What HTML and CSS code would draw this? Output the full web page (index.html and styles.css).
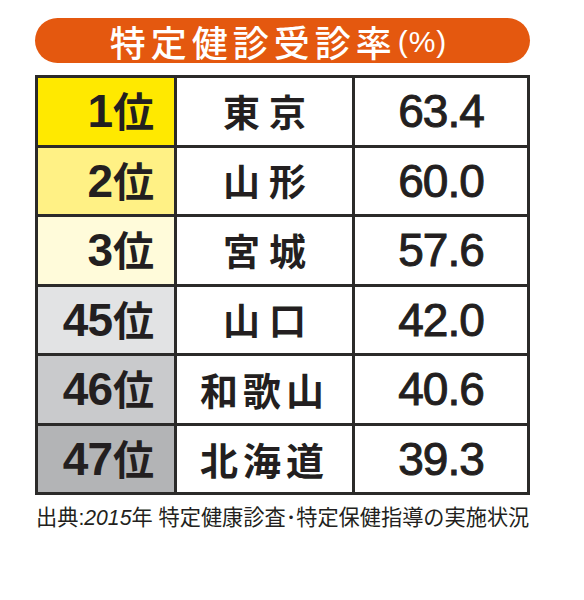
FILE: index.html
```html
<!DOCTYPE html>
<html lang="ja">
<head>
	<meta charset="UTF-8">
	<title>特定健診受診率</title>
	<link rel="stylesheet" href="styles.css">
</head>
<body>
	<section class="ranking">
		<h3 class="ranking-title">特定健診受診率<span class="unit">(%)</span></h3>
		<table class="ranking-table">
			<tr>
				<td class="rank rank-1"><span class="num">1</span>位</td>
				<td class="pref wide">東京</td>
				<td class="value">63.4</td>
			</tr>
			<tr>
				<td class="rank rank-2"><span class="num">2</span>位</td>
				<td class="pref wide">山形</td>
				<td class="value">60.0</td>
			</tr>
			<tr>
				<td class="rank rank-3"><span class="num">3</span>位</td>
				<td class="pref wide">宮城</td>
				<td class="value">57.6</td>
			</tr>
			<tr>
				<td class="rank rank-45"><span class="num">45</span>位</td>
				<td class="pref wide">山口</td>
				<td class="value">42.0</td>
			</tr>
			<tr>
				<td class="rank rank-46"><span class="num">46</span>位</td>
				<td class="pref">和歌山</td>
				<td class="value">40.6</td>
			</tr>
			<tr>
				<td class="rank rank-47"><span class="num">47</span>位</td>
				<td class="pref">北海道</td>
				<td class="value">39.3</td>
			</tr>
		</table>
		<p class="source">出典<span class="latin">:</span><i class="latin">2015</i>年<span class="latin"> </span>特定健康診査･特定保健指導の実施状況</p>
	</section>
</body>
</html>
```

FILE: styles.css
```css
* {
	box-sizing: border-box;
}
html {
	background-color: #fff;
	color: #231f20;
}
body {
	margin: 0;
	padding: 0;
	font-family: "Noto Sans CJK JP", sans-serif;
}
.ranking {
	width: 495px;
	margin: 18px 0 0 35px;
}
.ranking-title {
	height: 45px;
	margin: 0 0 12px 0;
	border-radius: 23px;
	background: #e4580f;
	color: #fff;
	display: flex;
	justify-content: center;
	align-items: center;
	font-size: 36px;
	font-weight: 500;
	letter-spacing: 5px;
	line-height: 1;
	padding-right: 8px;
}
.ranking-title .unit {
	font-family: "Liberation Sans", sans-serif;
	font-size: 30px;
	letter-spacing: 1px;
	margin-left: 1px;
	margin-top: 2px;
}
.ranking-table {
	width: 495px;
	border-spacing: 3px;
	background: #2b2a29;
	table-layout: fixed;
}
.ranking-table td {
	height: 66.5px;
	padding: 0;
	background: #fff;
	line-height: 1;
	font-weight: 700;
	vertical-align: middle;
}
.ranking-table td.rank {
	width: 136px;
	text-align: right;
	padding-right: 20px;
	font-size: 41px;
}
.ranking-table td.pref {
	width: 175px;
}
.rank .num {
	font-family: "Liberation Sans", sans-serif;
	font-size: 46px;
	letter-spacing: -1px;
	margin-right: 1px;
}
.rank-1 { background: #ffe900 !important; }
.rank-2 { background: #fff185 !important; }
.rank-3 { background: #fffbda !important; }
.rank-45 { background: #e2e3e4 !important; }
.rank-46 { background: #c9cacc !important; }
.rank-47 { background: #b3b4b6 !important; }
.pref {
	text-align: center;
	font-size: 38px;
	letter-spacing: 5px;
	padding-left: 5px;
}
.pref.wide {
	font-size: 37px;
	letter-spacing: 9px;
	padding-left: 9px;
}
.ranking-table td.value {
	text-align: center;
	font-family: "Liberation Sans", sans-serif;
	font-size: 46px;
	font-weight: 400;
	letter-spacing: -1px;
	-webkit-text-stroke: 1px #231f20;
}
.source {
	margin: 8px 0 0 1px;
	font-size: 21.2px;
	line-height: 1.2;
	white-space: nowrap;
}
.source .latin {
	font-family: "Liberation Sans", sans-serif;
}
```
